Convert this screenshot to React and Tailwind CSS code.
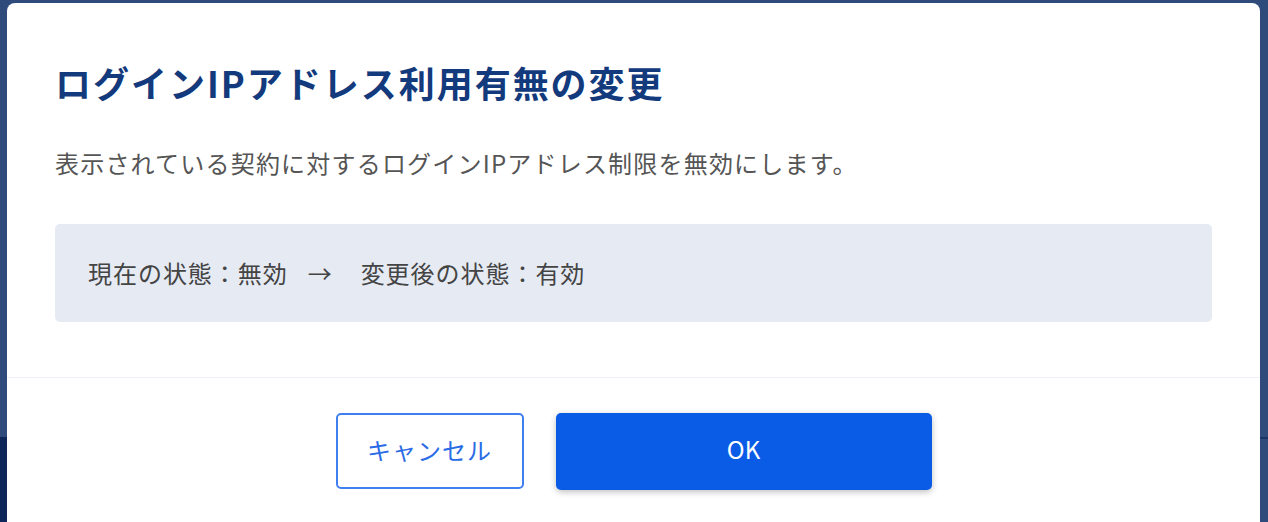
import React from 'react';

const jp = '"Noto Sans CJK JP", "Noto Sans", sans-serif';

export default function App() {
  const current = '無効';
  const next = '有効';

  return (
    <main className="relative h-[522px] w-[1268px] overflow-hidden" style={{ fontFamily: jp }}>
      {/* page behind the modal overlay */}
      <div className="h-[437px] bg-[#2f4b7c]" />
      <div className="flex h-[85px]">
        <div className="w-[634px] bg-[#0d2558]" />
        <div className="flex-1 border-t-2 border-[#1c3466] bg-[#2f4b7c]" />
      </div>

      <section className="absolute left-[7px] top-[3px] bottom-[-24px] w-[1253px] rounded-[8px] bg-white">
        <div className="px-[48px] pt-[52px] pb-[55px]">
          <h1 className="text-[36px] leading-[54px] font-bold tracking-[0.055em] text-[#123a7c]">
            ログインIPアドレス利用有無の変更
          </h1>
          <p className="mt-[36px] text-[24px] leading-[36px] tracking-[0.05em] text-[#555]">
            表示されている契約に対するログインIPアドレス制限を無効にします。
          </p>
          <div className="mt-[43px] rounded-[5px] bg-[#e6eaf3] px-[33px] py-[31px] text-[24px] leading-[36px] tracking-[0.04em] text-[#444]">
            現在の状態：{current}
            <span className="ml-[20px] mr-[28px]">→</span>
            変更後の状態：{next}
          </div>
        </div>
        <div className="h-px bg-[#edf1f7]" />
        <div className="flex justify-center gap-[32px] pt-[35px]">
          <button className="h-[76px] w-[188px] rounded-[5px] border-2 border-[#3f7ff0] bg-white pb-[3px] text-[24px] tracking-[0.04em] text-[#2a6be6]">
            キャンセル
          </button>
          <button className="h-[77px] w-[376px] rounded-[5px] bg-[#0a5ce6] pb-[5px] text-[24px] text-white shadow-[0_2px_6px_rgba(0,0,0,0.25)]">
            OK
          </button>
        </div>
      </section>
    </main>
  );
}
